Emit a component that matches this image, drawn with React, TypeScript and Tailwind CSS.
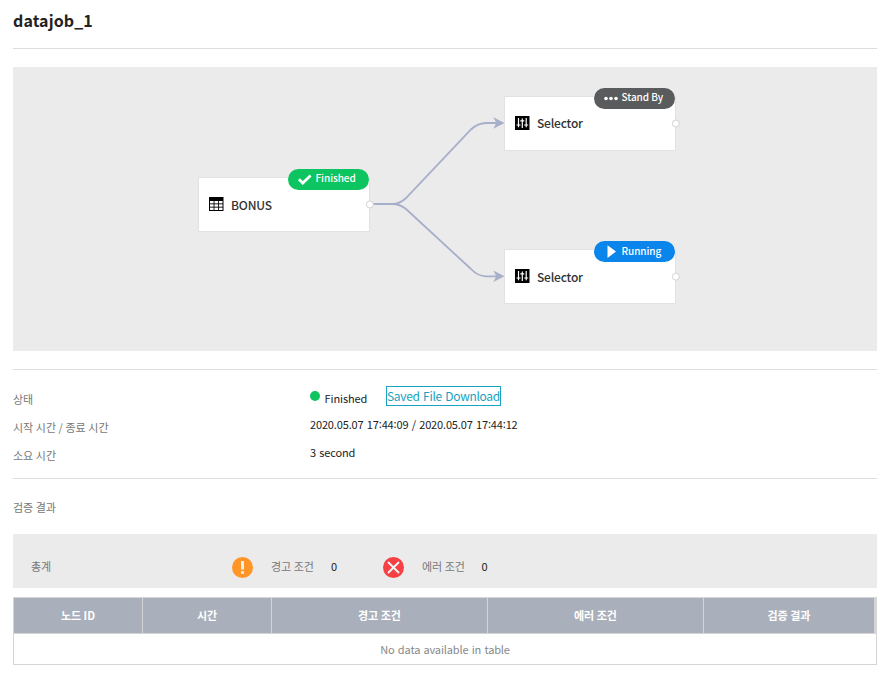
import React from "react";

type Status = "finished" | "standby" | "running";

const badges: Record<Status, { label: string; color: string }> = {
  finished: { label: "Finished", color: "bg-[#0cc460]" },
  standby: { label: "Stand By", color: "bg-[#595b5c]" },
  running: { label: "Running", color: "bg-[#0985ec]" },
};

function StatusIcon({ status }: { status: Status }) {
  return (
    <svg width="16" height="14" viewBox="0 0 16 14" className="shrink-0">
      {status === "finished" && (
        <path d="M2.900 6.200 6.800 10 14.600 2.500" fill="none" stroke="#fff" strokeWidth="2.700" />
      )}
      {status === "standby" && (
        <g fill="#fff">
          <circle cx="4" cy="6.500" r="1.800" />
          <circle cx="9" cy="6.500" r="1.800" />
          <circle cx="14" cy="6.500" r="1.800" />
        </g>
      )}
      {status === "running" && <path d="M5.500 .2 14 6.500 5.500 13Z" fill="#fff" />}
    </svg>
  );
}

function TableIcon() {
  return (
    <svg width="15" height="14" viewBox="0 0 15 14" className="relative -top-px">
      <path d="M0 0h14.500v14H0z" fill="#000" />
      <g fill="#fff">
        {[4, 7.3, 10.6].map((y) => (
          <React.Fragment key={y}>
            <rect x="1" y={y} width="3.600" height="2.400" />
            <rect x="5.450" y={y} width="3.600" height="2.400" />
            <rect x="9.900" y={y} width="3.600" height="2.400" />
          </React.Fragment>
        ))}
      </g>
    </svg>
  );
}

function SelectorIcon() {
  return (
    <svg width="15" height="14" viewBox="0 0 15 14" className="relative -top-px">
      <path d="M0 0h14.500v14H0z" fill="#000" />
      <path
        d="M3.500 2v9.300M7.300 2.600V12M11.200 2v9.300M1.500 9h4M5.300 4.800h4M9.200 9h4"
        fill="none"
        stroke="#fff"
        strokeWidth="1.200"
      />
    </svg>
  );
}

function Node({
  label,
  status,
  icon,
  place,
}: {
  label: string;
  status: Status;
  icon: React.ReactNode;
  place: string;
}) {
  const badge = badges[status];
  return (
    <div
      className={`absolute ${place} flex h-[55px] w-[172px] items-center border border-[#e2e2e2] bg-white pl-[10px]`}
    >
      {icon}
      <span
        className={`ml-[7px] text-[12px] leading-[20px] font-medium tracking-[-0.2px] text-[#333] ${
          status === "standby" ? "pb-[2px]" : ""
        }`}
      >
        {label}
      </span>
      <div
        className={`absolute -top-[9px] right-0 flex h-[21px] w-[81px] items-center rounded-full pl-[8px] ${badge.color}`}
      >
        <StatusIcon status={status} />
        <span
          className={`ml-[3.5px] text-[10px] leading-[16px] font-medium tracking-[-0.05px] whitespace-nowrap text-white ${
            status === "running" ? "pb-[2px]" : "pb-[3px]"
          }`}
        >
          {badge.label}
        </span>
      </div>
    </div>
  );
}

function Edges() {
  return (
    <svg className="absolute inset-0" width="864" height="284" viewBox="0 0 864 284">
      <g fill="none" stroke="#a8afca" strokeWidth="1.800">
        <path d="M359 137H379Q387 137 393 131L458 62.500Q465 56 473 56H486" />
        <path d="M359 137H379Q387 137 393 142L458 202Q465 209.300 473 209.300H486" />
      </g>
      <g fill="#a8afca">
        <path d="M480.300 50.300 491.500 56 480.300 61.700 483.300 56Z" />
        <path d="M480.300 203.600 491.500 209.300 480.300 215 483.300 209.300Z" />
      </g>
      <g fill="#fff" stroke="#d4d4d4">
        <circle cx="356.800" cy="137.500" r="3.500" />
        <circle cx="662.800" cy="56.500" r="3.500" />
        <circle cx="662.800" cy="209.700" r="3.500" />
      </g>
    </svg>
  );
}

// Clock time whose colons sit at digit height.
function Time({ value }: { value: string }) {
  return (
    <>
      {value.split(":").map((part, index) => (
        <React.Fragment key={index}>
          {index > 0 && <span className="relative -top-px">:</span>}
          {part}
        </React.Fragment>
      ))}
    </>
  );
}

const columns = [
  { label: "노드 ID", width: "w-[129px]" },
  { label: "시간", width: "w-[129px]" },
  { label: "경고 조건", width: "w-[216px]" },
  { label: "에러 조건", width: "w-[216px]" },
  { label: "검증 결과", width: "w-[170px]" },
];

export default function App() {
  return (
    <main className="h-[675px] w-[884px] overflow-hidden bg-white px-[13px] pr-[7px] font-['Noto_Sans_CJK_KR','Noto_Sans',sans-serif] text-[11px] leading-[16px] text-[#222]">
      <header className="flex h-[49px] items-start border-b border-[#ddd] pt-[8px]">
        <h1 className="text-[16px] leading-[24px] font-bold tracking-[0.1px]">datajob_1</h1>
      </header>

      <section className="relative mt-[18px] h-[284px] bg-[#ebebeb]">
        <Node label="BONUS" status="finished" icon={<TableIcon />} place="top-[110px] left-[185px]" />
        <Node label="Selector" status="standby" icon={<SelectorIcon />} place="top-[29px] left-[491px]" />
        <Node label="Selector" status="running" icon={<SelectorIcon />} place="top-[182px] left-[491px]" />
        <Edges />
      </section>

      <section className="mt-[18px] h-[110px] border-y border-[#ddd] pt-[16px]">
        <div className="flex h-[20px]">
          <span className="w-[297px] pt-[5px] text-[#777]">상태</span>
          <i className="mt-[5px] h-[10px] w-[10px] rounded-full bg-[#0cc460]" />
          <span className="ml-[4.5px] w-[61.5px] pt-[4px] tracking-[-0.1px]">Finished</span>
          <a className="h-[20px] w-[115px] border border-[#17a2bf] text-[12px] leading-[18px] tracking-[-0.3px] whitespace-nowrap text-[#17a2bf] [word-spacing:1px]">
            Saved File Download
          </a>
        </div>
        <div className="mt-[10px] flex">
          <span className="w-[297px] pt-[3px] text-[#777] [word-spacing:0.1px]">시작 시간 / 종료 시간</span>
          <span className="tracking-[-0.15px] [word-spacing:1px]">
            2020.05.07 <Time value="17:44:09" /> / 2020.05.07 <Time value="17:44:12" />
          </span>
        </div>
        <div className="mt-[9px] flex">
          <span className="w-[297px] pt-[3px] text-[#777] [word-spacing:0.1px]">소요 시간</span>
          <span className="tracking-[-0.15px] [word-spacing:1px]">3 second</span>
        </div>
      </section>

      <h2 className="mt-[20px] h-[17px] text-[#777]">검증 결과</h2>

      <section className="mt-[18px] flex h-[54px] items-center bg-[#ebebeb] pt-[12px] pl-[18px]">
        <span className="w-[201px] pb-[2px] text-[#777]">총계</span>
        <svg width="21" height="21" viewBox="0 0 21 21">
          <circle cx="10.500" cy="10.500" r="10.500" fill="#ff9427" />
          <path d="M9 4h3v8.500H9zM9 14.200h3v2.600H9z" fill="#eee" />
        </svg>
        <span className="ml-[18px] w-[60px] pb-[2px] text-[#777]">경고 조건</span>
        <span className="w-[52px] pb-[2px]">0</span>
        <svg width="21" height="21" viewBox="0 0 21 21">
          <circle cx="10.500" cy="10.500" r="10.500" fill="#f64044" />
          <path d="m5 5 11 11m0-11-11 11" stroke="#f4f4f4" strokeWidth="2" />
        </svg>
        <span className="ml-[18px] w-[59.5px] pb-[2px] text-[#777]">에러 조건</span>
        <span className="pb-[2px]">0</span>
      </section>

      <section className="mt-[9px] h-[68px] border border-[#d5d5d8]">
        <div className="flex h-[36px] border-b border-[#d5d5d8] bg-[#d5d5d8]">
          {columns.map((column, index) => (
            <div
              key={column.label}
              className={`flex items-center justify-center bg-[#a9b0bb] pb-px font-bold text-white ${column.width} ${
                index < columns.length - 1 ? "border-r border-[#d5d5d8]" : ""
              }`}
            >
              {column.label}
            </div>
          ))}
        </div>
        <p className="flex h-[30px] items-center justify-center tracking-[-0.15px] text-[#888] [word-spacing:1px]">
          No data available in table
        </p>
      </section>
    </main>
  );
}
